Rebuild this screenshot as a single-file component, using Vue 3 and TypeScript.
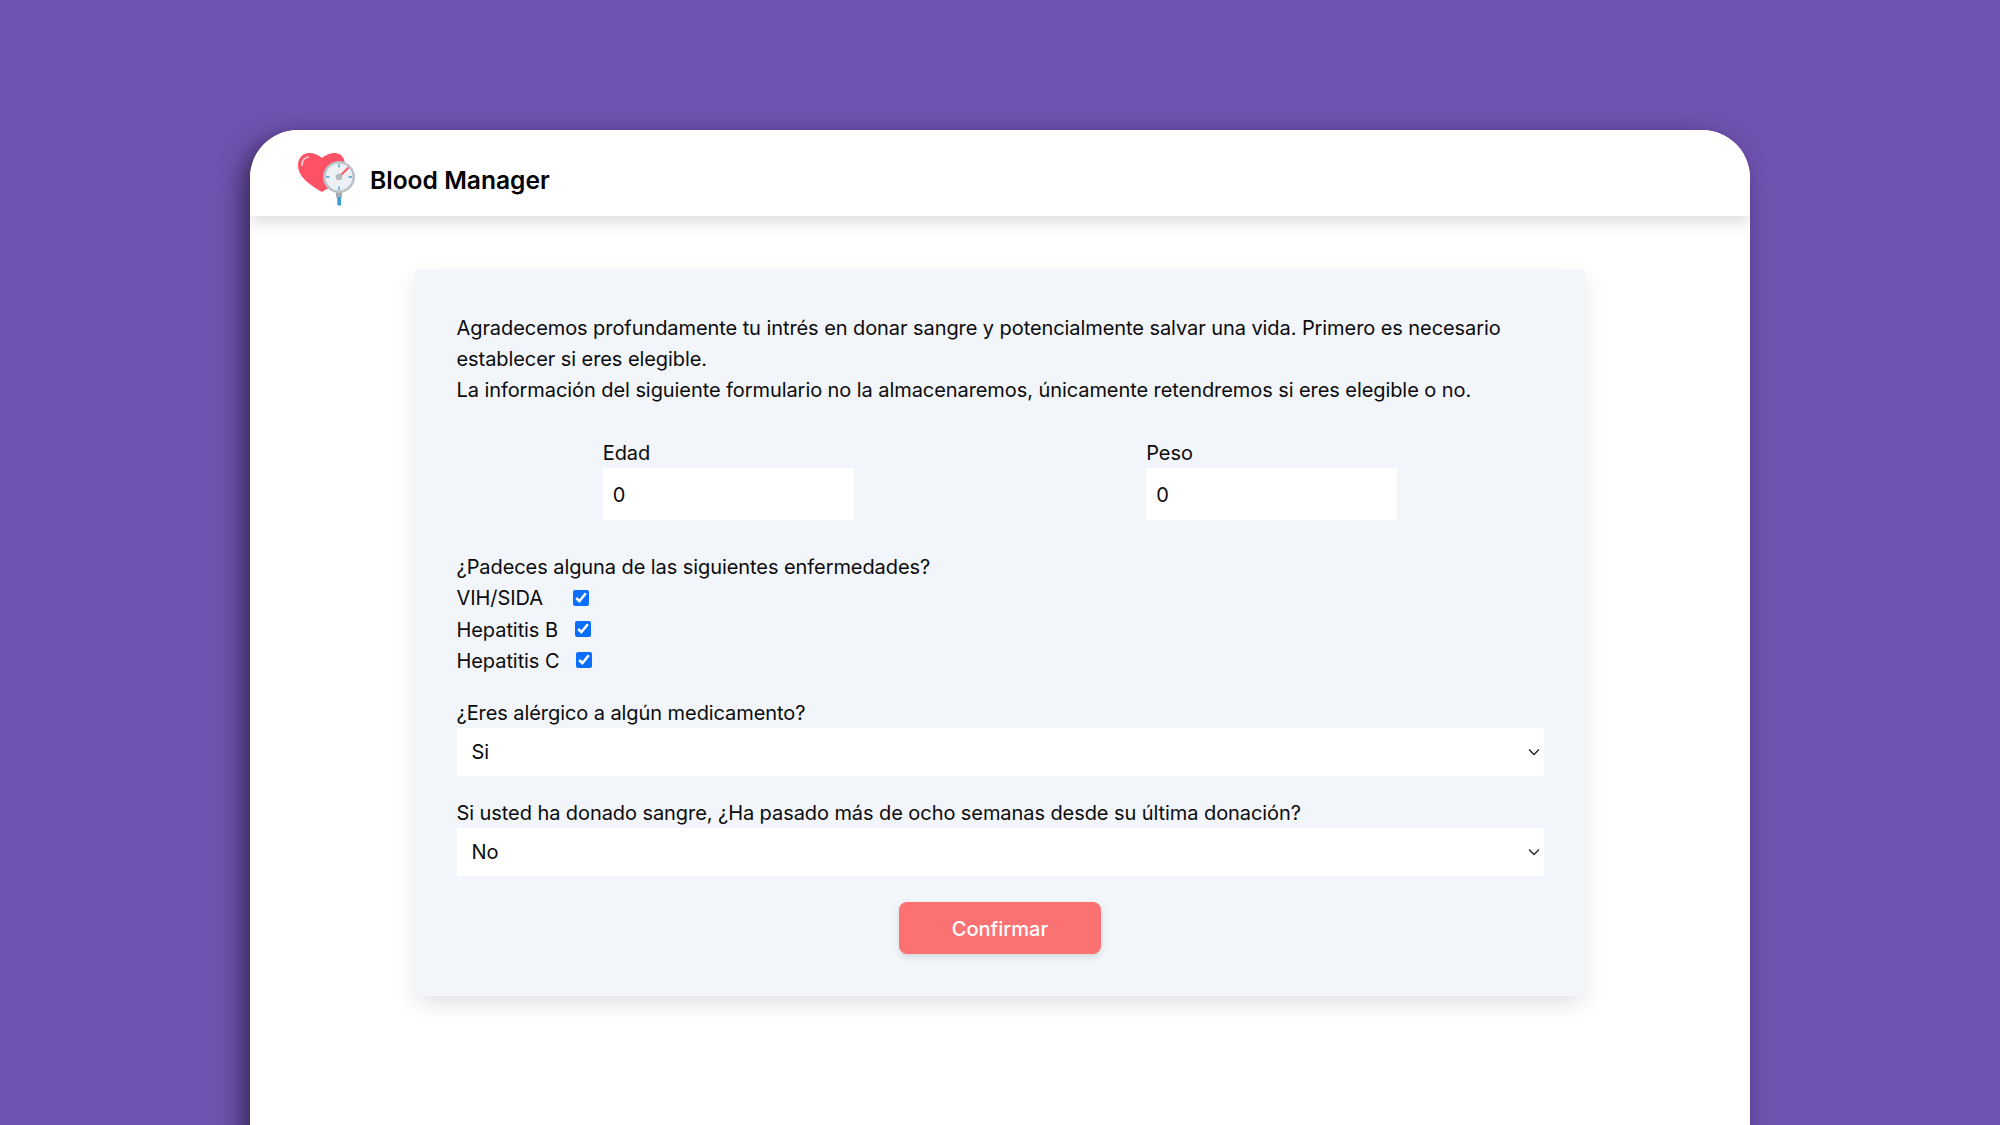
<script setup lang="ts">
import { ref } from 'vue'

const edad = ref(0)
const peso = ref(0)
const diseases = ref([
    { name: 'VIH/SIDA', checked: true },
    { name: 'Hepatitis B', checked: true },
    { name: 'Hepatitis C', checked: true },
])
const allergic = ref('Si')
const donated = ref('No')
</script>

<template>
    <div class="page">
        <div class="window">
            <header class="navbar">
                <svg class="logo" viewBox="0 0 60 60" aria-hidden="true">
                    <path d="M25 42C13 35 1 27 1 15 1 8 6 3 12 3c5 0 10 2 13 5 3-3 8-5 13-5 6 0 10 5 10 12 0 12-11 20-23 27z" fill="#fd5266" />
                    <path d="M5 15c0-4 2-7 6-8" fill="none" stroke="#ffc9cf" stroke-width="1.800" stroke-linecap="round" />
                    <rect x="39" y="41" width="6" height="6.500" fill="#a4abb1" />
                    <rect x="40.300" y="47" width="3.800" height="8.500" rx="1.200" fill="#3d9ad9" />
                    <circle cx="42" cy="27" r="14.700" fill="#eef1f4" stroke="#bcc2c8" stroke-width="2.600" />
                    <path d="M42 14.500v2.500M42 37v2.500M29.500 27h2.500M52 27h2.500" stroke="#3d9ad9" stroke-width="1.300" stroke-linecap="round" />
                    <path d="M43 26l8-8" stroke="#fd5266" stroke-width="1.800" stroke-linecap="round" />
                    <circle cx="42" cy="27" r="3.300" fill="#b6bcc2" />
                </svg>
                <span class="brand">Blood Manager</span>
            </header>

            <main class="content">
                <form class="card" @submit.prevent>
                    <p class="intro text">
                        Agradecemos profundamente tu intrés en donar sangre y potencialmente salvar una vida. Primero es necesario establecer si eres elegible.<br />
                        La información del siguiente formulario no la almacenaremos, únicamente retendremos si eres elegible o no.
                    </p>

                    <div class="numbers">
                        <label class="number">
                            <span class="text">Edad</span>
                            <input v-model.number="edad" type="text" />
                        </label>
                        <label class="number">
                            <span class="text">Peso</span>
                            <input v-model.number="peso" type="text" />
                        </label>
                    </div>

                    <fieldset class="diseases">
                        <legend class="text">¿Padeces alguna de las siguientes enfermedades?</legend>
                        <label v-for="d in diseases" :key="d.name" class="disease">
                            <span class="text">{{ d.name }}</span>
                            <input v-model="d.checked" type="checkbox" />
                        </label>
                    </fieldset>

                    <label class="field">
                        <span class="text">¿Eres alérgico a algún medicamento?</span>
                        <span class="select-wrap">
                            <select v-model="allergic">
                                <option>Si</option>
                                <option>No</option>
                            </select>
                            <svg class="chevron" viewBox="0 0 12 8" aria-hidden="true">
                                <path d="M1 1.500l5 5 5-5" />
                            </svg>
                        </span>
                    </label>

                    <label class="field">
                        <span class="text">Si usted ha donado sangre, ¿Ha pasado más de ocho semanas desde su última donación?</span>
                        <span class="select-wrap">
                            <select v-model="donated">
                                <option>Si</option>
                                <option>No</option>
                            </select>
                            <svg class="chevron" viewBox="0 0 12 8" aria-hidden="true">
                                <path d="M1 1.500l5 5 5-5" />
                            </svg>
                        </span>
                    </label>

                    <div class="actions">
                        <button class="confirm" type="submit">Confirmar</button>
                    </div>
                </form>
            </main>
        </div>
    </div>
</template>

<style>
html,
body {
    margin: 0;
    overflow: hidden;
}
</style>

<style scoped>
.page {
    height: 1125px;
    box-sizing: border-box;
    padding: 130px 250px 0;
    background: #7052b0;
    overflow: hidden;
    font-family: Inter, "Liberation Sans", sans-serif;
    font-size: 20px;
    line-height: 31.2px;
    letter-spacing: -0.075px;
    color: #0b0b0b;
}

/* Inter sits a pixel higher in its line box than the reference's text */
.text {
    display: block;
    transform: translateY(1px);
}

.window {
    height: 1100px;
    background: #fff;
    border-radius: 48px 48px 0 0;
    overflow: hidden;
    box-shadow: -8px 8px 24px rgba(0, 0, 0, 0.5);
}

.navbar {
    height: 86px;
    box-sizing: border-box;
    display: flex;
    align-items: center;
    gap: 13px;
    padding: 14px 0 0 47px;
    background: #fff;
    box-shadow: 0 6px 16px rgba(0, 0, 0, 0.14);
}

.logo {
    width: 60px;
    height: 60px;
    overflow: visible;
}

.brand {
    margin-top: 2px;
    font-size: 24.600px;
    font-weight: 600;
    letter-spacing: 0;
    color: #000;
}

.content {
    padding: 54px 165px 0;
}

.card {
    box-sizing: border-box;
    height: 726px;
    padding: 42px 41.500px;
    background: #f2f5fa;
    box-shadow: 0 8px 22px -2px rgba(0, 0, 0, 0.13);
}

.intro {
    margin: 0;
}

.numbers {
    display: grid;
    grid-template-columns: 1fr 1fr;
    margin-top: 31.200px;
}

.number {
    justify-self: center;
    display: flex;
    flex-direction: column;
    width: 251px;
}

.number input {
    box-sizing: border-box;
    width: 100%;
    height: 52px;
    padding: 2px 10px 0;
    border: 0;
    background: #fff;
    font: inherit;
    letter-spacing: inherit;
    color: inherit;
}

.diseases {
    margin: 31.200px 0 0;
    padding: 0;
    border: 0;
}

.diseases legend {
    padding: 0;
}

.disease {
    display: flex;
    align-items: center;
    gap: 17px;
    height: 31.200px;
}

.disease:first-of-type {
    gap: 30px;
}

.disease input {
    width: 16px;
    height: 16px;
    margin: 0;
    accent-color: #0a6eff;
}

.field {
    display: block;
    margin-top: 20.800px;
}

.select-wrap {
    display: block;
    position: relative;
}

.select-wrap select {
    display: block;
    width: 100%;
    height: 48px;
    padding: 2px 15px 0;
    border: 0;
    border-radius: 0;
    background: #fff;
    font: inherit;
    letter-spacing: inherit;
    color: inherit;
    appearance: none;
}

.chevron {
    position: absolute;
    top: 20px;
    right: 4px;
    width: 12px;
    height: 8px;
    fill: none;
    stroke: #222;
    stroke-width: 1.300;
    pointer-events: none;
}

.actions {
    display: flex;
    justify-content: center;
    margin-top: 26px;
}

.confirm {
    width: 202px;
    height: 52px;
    padding: 3px 0 0;
    border: 0;
    border-radius: 8px;
    background: #fc7272;
    box-shadow: 0 3px 6px rgba(0, 0, 0, 0.12);
    font: inherit;
    font-weight: 500;
    color: #fff;
    cursor: pointer;
}
</style>
